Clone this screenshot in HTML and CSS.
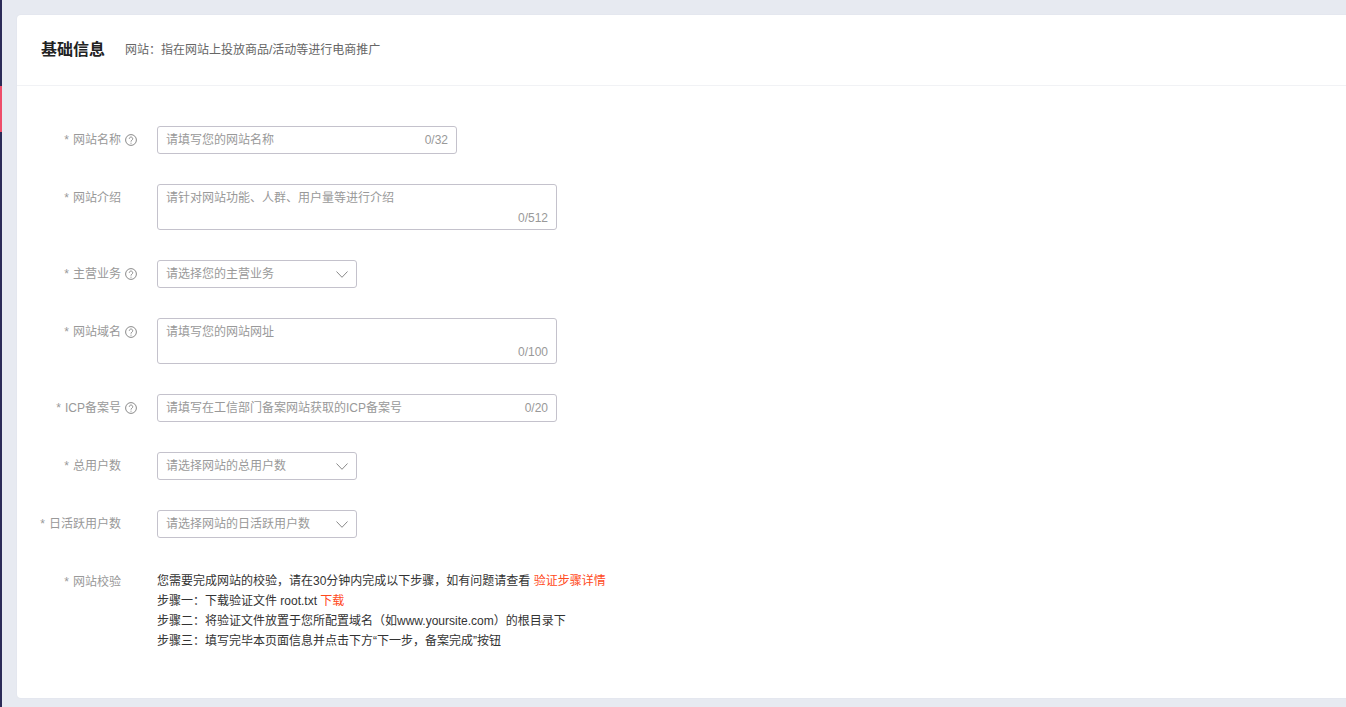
FILE: index.html
```html
<!DOCTYPE html>
<html lang="zh">
<head>
<meta charset="utf-8">
<title>基础信息</title>
<link rel="stylesheet" href="styles.css">
</head>
<body>
<div class="app">
  <aside class="rail"><div class="rail-mark"></div></aside>
  <main class="card">
    <header class="card-head">
      <h1 class="title">基础信息</h1>
      <p class="subtitle">网站：指在网站上投放商品/活动等进行电商推广</p>
    </header>
    <form class="form">
      <div class="row">
        <div class="label"><span class="star">*</span>网站名称</div>
        <div class="hint"><svg class="help" viewBox="0 0 12 12"><circle cx="6" cy="6" r="5.4"/><path d="M4.3 4.7a1.7 1.7 0 1 1 2.7 1.4c-.7.5-1 .8-1 1.5"/><path d="M6 8.7v1"/></svg></div>
        <div class="input w300 h28"><span class="ph">请填写您的网站名称</span><span class="count">0/32</span></div>
      </div>
      <div class="row">
        <div class="label"><span class="star">*</span>网站介绍</div>
        <div class="hint"></div>
        <div class="input w400 h46 area"><span class="ph">请针对网站功能、人群、用户量等进行介绍</span><span class="count">0/512</span></div>
      </div>
      <div class="row">
        <div class="label"><span class="star">*</span>主营业务</div>
        <div class="hint"><svg class="help" viewBox="0 0 12 12"><circle cx="6" cy="6" r="5.4"/><path d="M4.3 4.7a1.7 1.7 0 1 1 2.7 1.4c-.7.5-1 .8-1 1.5"/><path d="M6 8.7v1"/></svg></div>
        <div class="input w200 h28"><span class="ph">请选择您的主营业务</span><svg class="chev" viewBox="0 0 12 7"><path d="M.5.5 6 6.3 11.5.5"/></svg></div>
      </div>
      <div class="row">
        <div class="label"><span class="star">*</span>网站域名</div>
        <div class="hint"><svg class="help" viewBox="0 0 12 12"><circle cx="6" cy="6" r="5.4"/><path d="M4.3 4.7a1.7 1.7 0 1 1 2.7 1.4c-.7.5-1 .8-1 1.5"/><path d="M6 8.7v1"/></svg></div>
        <div class="input w400 h46 area"><span class="ph">请填写您的网站网址</span><span class="count">0/100</span></div>
      </div>
      <div class="row">
        <div class="label"><span class="star">*</span>ICP备案号</div>
        <div class="hint"><svg class="help" viewBox="0 0 12 12"><circle cx="6" cy="6" r="5.4"/><path d="M4.3 4.7a1.7 1.7 0 1 1 2.7 1.4c-.7.5-1 .8-1 1.5"/><path d="M6 8.7v1"/></svg></div>
        <div class="input w400 h28"><span class="ph">请填写在工信部门备案网站获取的ICP备案号</span><span class="count">0/20</span></div>
      </div>
      <div class="row">
        <div class="label"><span class="star">*</span>总用户数</div>
        <div class="hint"></div>
        <div class="input w200 h28"><span class="ph">请选择网站的总用户数</span><svg class="chev" viewBox="0 0 12 7"><path d="M.5.5 6 6.3 11.5.5"/></svg></div>
      </div>
      <div class="row">
        <div class="label"><span class="star">*</span>日活跃用户数</div>
        <div class="hint"></div>
        <div class="input w200 h28"><span class="ph">请选择网站的日活跃用户数</span><svg class="chev" viewBox="0 0 12 7"><path d="M.5.5 6 6.3 11.5.5"/></svg></div>
      </div>
      <div class="row">
        <div class="label"><span class="star">*</span>网站校验</div>
        <div class="hint"></div>
        <div class="steps">
          <p>您需要完成网站的校验，请在30分钟内完成以下步骤，如有问题请查看 <a class="link">验证步骤详情</a></p>
          <p>步骤一：下载验证文件 root.txt <a class="link">下载</a></p>
          <p>步骤二：将验证文件放置于您所配置域名（如www.yoursite.com）的根目录下</p>
          <p>步骤三：填写完毕本页面信息并点击下方“下一步，备案完成”按钮</p>
        </div>
      </div>
    </form>
  </main>
</div>
</body>
</html>
```

FILE: styles.css
```css
* { box-sizing: border-box; }
html, body { margin: 0; height: 100%; overflow: hidden; }
body {
  background: #e7eaf1;
  font-family: "Liberation Sans", "Noto Sans CJK SC", sans-serif;
  font-size: 12px;
  line-height: 20px;
  color: #333;
}
.app { display: flex; height: 707px; padding-bottom: 9px; }
.rail { width: 2px; background: #2b2b58; margin-bottom: -9px; padding-top: 86px; flex: none; }
.rail-mark { height: 46px; background: #ee4d6a; }
.card {
  flex: none;
  width: 1360px;
  margin: 15px 0 0 15px;
  background: #fff;
  border-radius: 4px;
  box-shadow: 0 0 2px rgba(40, 50, 90, .06);
}
.card-head {
  display: flex;
  align-items: center;
  height: 71px;
  padding: 0 24px;
  border-bottom: 1px solid #f1f2f5;
}
.title { margin: 0 20px 0 0; font-size: 16px; font-weight: 700; color: #222; }
.subtitle { margin: 0; color: #666; }
.form { display: flex; flex-direction: column; gap: 30px; padding-top: 40px; }
.row { display: flex; align-items: flex-start; }
.label { width: 104px; text-align: right; line-height: 28px; color: #999; white-space: nowrap; }
.star { margin-right: 4px; }
.hint { width: 36px; height: 28px; padding: 8px 0 0 4px; }
.help { display: block; width: 12px; height: 12px; fill: none; stroke: #8a8a8a; stroke-width: 1; }
.input {
  display: flex;
  justify-content: space-between;
  align-items: center;
  padding: 0 8px;
  border: 1px solid #c4c2cc;
  border-radius: 3px;
  background: #fff;
}
.w200 { width: 200px; }
.w300 { width: 300px; }
.w400 { width: 400px; }
.h28 { height: 28px; }
.h46 { height: 46px; }
.area { position: relative; align-items: flex-start; padding-top: 3px; }
.area .count { position: absolute; right: 8px; bottom: 1px; }
.ph, .count { color: #999; }
.chev { width: 12px; height: 7px; fill: none; stroke: #8a8a8a; stroke-width: 1; margin-right: 0; }
.steps { padding-top: 3px; color: #333; }
.steps p { margin: 0; }
.link { color: #ff4a1c; }
```
